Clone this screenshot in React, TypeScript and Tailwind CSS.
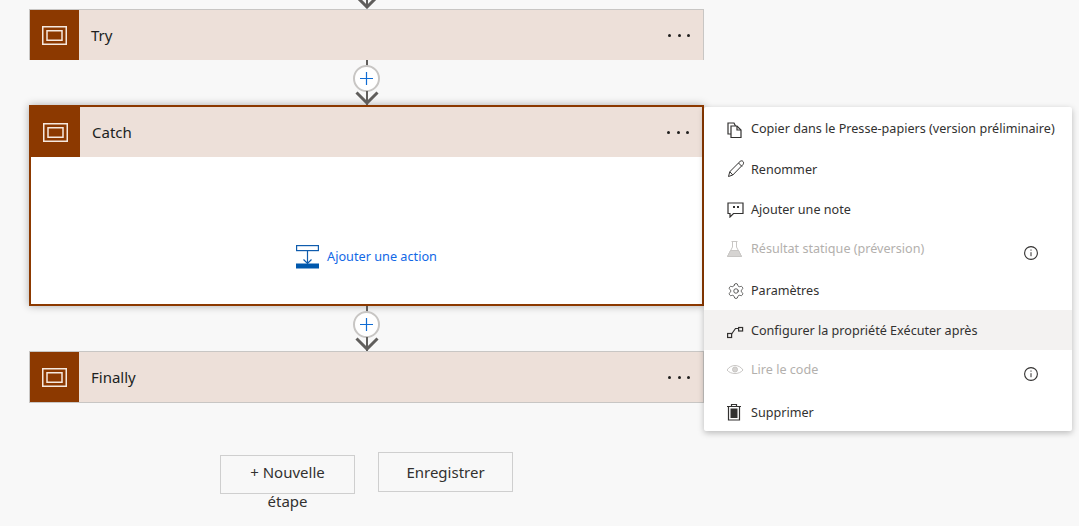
import type { ReactNode } from 'react';
import { Settings } from 'lucide-react';

function ScopeIcon() {
    return (
        <svg width="25" height="19" viewBox="0 0 25 19" fill="none" stroke="#f6e9df" strokeWidth="1.500">
            <rect x="0.750" y="0.750" width="23.500" height="17.500" />
            <rect x="5" y="4.750" width="15" height="9.500" />
        </svg>
    );
}

function Dots() {
    return (
        <div className="ml-auto mr-[13px] flex gap-[6.500px]">
            <span className="h-[3px] w-[3px] rounded-full bg-[#201f1e]" />
            <span className="h-[3px] w-[3px] rounded-full bg-[#201f1e]" />
            <span className="h-[3px] w-[3px] rounded-full bg-[#201f1e]" />
        </div>
    );
}

function CardHeader({ title }: { title: string }) {
    return (
        <div className="flex h-[50px] items-center bg-[#ede0d9]">
            <div className="flex h-full w-[49px] items-center justify-center bg-[#8c3900]">
                <ScopeIcon />
            </div>
            <span className="ml-[12px] text-[15px] text-[#201f1e]">{title}</span>
            <Dots />
        </div>
    );
}

function Chevron() {
    return (
        <svg width="24" height="14" viewBox="0 0 24 14" fill="none" stroke="#605e5c" strokeWidth="3" className="block">
            <path d="M1.500 1.500 12 12 22.500 1.500" />
            <path d="M12 0v12" strokeWidth="2" />
        </svg>
    );
}

function Connector() {
    return (
        <div className="relative flex h-[45px] flex-col items-center justify-end">
            <div className="absolute bottom-0 top-0 w-[2px] bg-[#605e5c]" />
            <div className="absolute top-[5px] flex h-[27px] w-[27px] items-center justify-center rounded-full border-2 border-[#c8c6c4] bg-white">
                <svg width="13" height="13" viewBox="0 0 13 13" stroke="#0f6cd4" strokeWidth="1.200">
                    <path d="M6.500 0v13M0 6.500h13" />
                </svg>
            </div>
            <div className="relative">
                <Chevron />
            </div>
        </div>
    );
}

function AddActionIcon() {
    return (
        <svg width="23" height="24" viewBox="0 0 23 24" fill="none" stroke="#0f5cad" strokeWidth="1.200">
            <rect x="0.600" y="0.600" width="21.800" height="5" />
            <path d="M11.500 6v12M7.500 14.500l4 4 4-4" />
            <rect x="0" y="18.500" width="23" height="5" fill="#0058ad" stroke="none" />
        </svg>
    );
}

const iconProps = { width: 18, height: 18, viewBox: '0 0 18 18', fill: 'none', stroke: 'currentColor', strokeWidth: 1 };

function CopyIcon() {
    return (
        <svg {...iconProps} strokeWidth={1.200}>
            <path d="M4 14H1V3h6l1.500 3" />
            <path d="M4 6h6l4 4v7.500H4z" />
            <path d="M10 6v4h4" />
        </svg>
    );
}

function PencilIcon() {
    return (
        <svg {...iconProps}>
            <path d="M1.500 16.500l1.300-4.800L13 1.500c1-.9 2.400-.9 3 0 .8.800.7 2 0 3L5.800 15z" />
            <path d="M2.800 11.700 5.800 15M11.500 3l3.500 3.500" />
        </svg>
    );
}

function NoteIcon() {
    return (
        <svg {...iconProps} strokeWidth={1.200}>
            <path d="M1 3h15v10.500H6.500L3 17v-3.500H1z" />
            <rect x="6" y="6" width="2" height="2" fill="currentColor" stroke="none" />
            <rect x="10" y="6" width="2" height="2" fill="currentColor" stroke="none" />
        </svg>
    );
}

function FlaskIcon() {
    return (
        <svg {...iconProps} viewBox="1.500 0 18 18" stroke="#c8c6c4">
            <path d="M6 1.500h6M7 1.500v5.500l-5 9.500h14l-5-9.500V1.500" />
            <path d="M5 10.500h8l3 6H2z" fill="#d6d4d2" />
        </svg>
    );
}

function RunAfterIcon() {
    return (
        <svg {...iconProps} strokeWidth={1.200}>
            <rect x="0.600" y="11.500" width="4" height="4" />
            <rect x="11.600" y="5.500" width="4" height="3.500" />
            <path d="M4.600 12 8.500 6.500h3.100" />
        </svg>
    );
}

function EyeIcon() {
    return (
        <svg {...iconProps} viewBox="1 0 18 18" stroke="#c8c6c4">
            <path d="M1 9c2-3 5-4.500 8-4.500S15 6 17 9c-2 2.500-5 3.500-8 3.500S3 11.500 1 9z" />
            <circle cx="9" cy="8.500" r="2.500" fill="#d6d4d2" />
        </svg>
    );
}

function TrashIcon() {
    return (
        <svg {...iconProps} viewBox="2 0 18 18" strokeWidth={1.200}>
            <path d="M2 3.500h14M6.500 3.500V1.500h5v2M3.500 3.500v13.500h11V3.500" />
            <rect x="5.500" y="5.500" width="7" height="9.500" fill="currentColor" stroke="none" />
        </svg>
    );
}

function InfoIcon() {
    return (
        <svg width="14" height="14" viewBox="0 0 14 14" fill="none" stroke="#323130" className="ml-auto mr-[34px] mt-[9px]">
            <circle cx="7" cy="7" r="6.400" strokeWidth="1.100" />
            <path d="M7 6.200v4" />
            <path d="M7 3.500v1.200" />
        </svg>
    );
}

function MenuItem({ icon, label, className, disabled, info }: { icon: ReactNode; label: string; className: string; disabled?: boolean; info?: boolean }) {
    return (
        <div className={`flex items-center pl-[23px] ${className} ${disabled ? 'text-[#b3b0ad]' : 'text-[#323130]'}`}>
            <span className="flex w-[18px] justify-center">{icon}</span>
            <span className="ml-[6px] whitespace-nowrap pt-[2px] text-[12.600px]">{label}</span>
            {info && <InfoIcon />}
        </div>
    );
}

export default function App() {
    return (
        <div className="relative h-[526px] w-[1079px] overflow-hidden bg-[#f8f8f8] font-['Noto_Sans','Open_Sans',sans-serif]">
            <div className="ml-[29px] w-[675px]">
                <div className="flex h-[9px] items-end justify-center overflow-hidden">
                    <div className="h-[9px] w-[18px] [&>svg]:ml-[-3px] [&>svg]:mt-[-5px]">
                        <Chevron />
                    </div>
                </div>

                <div className="h-[51px] border border-[#c8c6c4]">
                    <CardHeader title="Try" />
                </div>

                <Connector />

                <div className="h-[201px] border-2 border-[#8c3900] bg-white shadow-[0_0_8px_rgba(0,0,0,0.3)]">
                    <CardHeader title="Catch" />
                    <div className="flex items-center justify-center gap-[8px] pt-[88px]">
                        <AddActionIcon />
                        <span className="text-[12.700px] text-[#1268e6]">Ajouter une action</span>
                    </div>
                </div>

                <Connector />

                <div className="h-[52px] border border-[#c8c6c4]">
                    <CardHeader title="Finally" />
                </div>

                <div className="mt-[49px] flex items-start pl-[191px]">
                    <button className="mt-[3px] h-[39px] w-[135px] border border-[#cfcfcf] px-[24px] pt-[2px] text-center text-[15px] leading-[29px] text-[#323130]">
                        + Nouvelle étape
                    </button>
                    <button className="ml-[23px] h-[40px] w-[135px] border border-[#cfcfcf] text-center text-[15px] text-[#323130]">
                        Enregistrer
                    </button>
                </div>
            </div>

            <div className="absolute left-[704px] top-[107px] w-[368px] rounded-[2px] bg-white pt-[1px] shadow-[0_2px_6px_rgba(0,0,0,0.25)]">
                <MenuItem icon={<CopyIcon />} label="Copier dans le Presse-papiers (version préliminaire)" className="h-[41px]" />
                <MenuItem icon={<PencilIcon />} label="Renommer" className="h-[40px]" />
                <MenuItem icon={<NoteIcon />} label="Ajouter une note" className="h-[40px]" />
                <MenuItem icon={<FlaskIcon />} label="Résultat statique (préversion)" className="h-[41px] pb-[2px]" disabled info />
                <MenuItem icon={<Settings className="h-[18px] w-[18px]" strokeWidth={1} />} label="Paramètres" className="h-[40px] pt-[1px]" />
                <MenuItem icon={<RunAfterIcon />} label="Configurer la propriété Exécuter après" className="h-[40px] bg-[#f3f2f1] pt-[1px]" />
                <MenuItem icon={<EyeIcon />} label="Lire le code" className="h-[41px] pb-[2px]" disabled info />
                <MenuItem icon={<TrashIcon />} label="Supprimer" className="h-[40px] pt-[2px]" />
            </div>
        </div>
    );
}
